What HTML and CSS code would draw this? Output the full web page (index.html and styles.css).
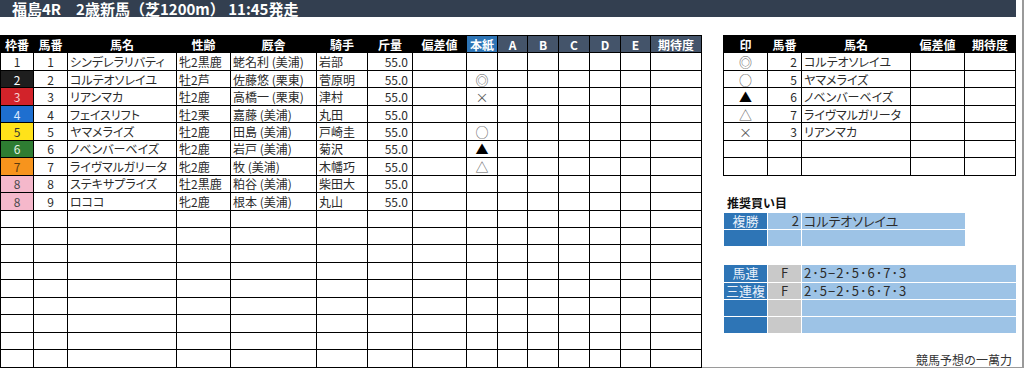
FILE: index.html
```html
<!DOCTYPE html>
<html lang="ja">
<head>
<meta charset="utf-8">
<title>福島4R 2歳新馬</title>
<link rel="stylesheet" href="styles.css">
</head>
<body>
<div class="frame">
  <div class="title">福島4R　2歳新馬（芝1200m） 11:45発走</div>
  <div class="content">
    <table class="main">
      <colgroup>
        <col class="c33"><col class="c34"><col class="c109"><col class="c54"><col class="c86"><col class="c51"><col class="c45"><col class="c54"><col class="c31"><col class="c30"><col class="c31"><col class="c31"><col class="c31"><col class="c30"><col class="c51">
      </colgroup>
      <thead>
        <tr>
          <th>枠番</th><th>馬番</th><th>馬名</th><th>性齢</th><th>厩舎</th><th>騎手</th><th>斤量</th><th>偏差値</th>
          <th class="honshi">本紙</th><th class="sub">A</th><th class="sub">B</th><th class="sub">C</th><th class="sub">D</th><th class="sub">E</th><th class="sub">期待度</th>
        </tr>
      </thead>
      <tbody>
        <tr><td class="waku w1">1</td><td class="ctr">1</td><td class="name">シンデレラリバティ</td><td>牝2黒鹿</td><td>蛯名利 (美浦)</td><td>岩部</td><td class="num">55.0</td><td></td><td class="mark"></td><td></td><td></td><td></td><td></td><td></td><td></td></tr>
        <tr><td class="waku w2">2</td><td class="ctr">2</td><td class="name">コルテオソレイユ</td><td>牡2芦</td><td>佐藤悠 (栗東)</td><td>菅原明</td><td class="num">55.0</td><td></td><td class="mark">◎</td><td></td><td></td><td></td><td></td><td></td><td></td></tr>
        <tr><td class="waku w3">3</td><td class="ctr">3</td><td class="name">リアンマカ</td><td>牡2鹿</td><td>高橋一 (栗東)</td><td>津村</td><td class="num">55.0</td><td></td><td class="mark">×</td><td></td><td></td><td></td><td></td><td></td><td></td></tr>
        <tr><td class="waku w4">4</td><td class="ctr">4</td><td class="name">フェイスリフト</td><td>牡2栗</td><td>嘉藤 (美浦)</td><td>丸田</td><td class="num">55.0</td><td></td><td class="mark"></td><td></td><td></td><td></td><td></td><td></td><td></td></tr>
        <tr><td class="waku w5">5</td><td class="ctr">5</td><td class="name">ヤマメライズ</td><td>牡2鹿</td><td>田島 (美浦)</td><td>戸崎圭</td><td class="num">55.0</td><td></td><td class="mark">○</td><td></td><td></td><td></td><td></td><td></td><td></td></tr>
        <tr><td class="waku w6">6</td><td class="ctr">6</td><td class="name">ノベンバーベイズ</td><td>牝2鹿</td><td>岩戸 (美浦)</td><td>菊沢</td><td class="num">55.0</td><td></td><td class="mark dark">▲</td><td></td><td></td><td></td><td></td><td></td><td></td></tr>
        <tr><td class="waku w7">7</td><td class="ctr">7</td><td class="name">ライヴマルガリータ</td><td>牝2鹿</td><td>牧 (美浦)</td><td>木幡巧</td><td class="num">55.0</td><td></td><td class="mark">△</td><td></td><td></td><td></td><td></td><td></td><td></td></tr>
        <tr><td class="waku w8">8</td><td class="ctr">8</td><td class="name">ステキサプライズ</td><td>牡2黒鹿</td><td>粕谷 (美浦)</td><td>柴田大</td><td class="num">55.0</td><td></td><td class="mark"></td><td></td><td></td><td></td><td></td><td></td><td></td></tr>
        <tr><td class="waku w8">8</td><td class="ctr">9</td><td class="name">ロココ</td><td>牝2鹿</td><td>根本 (美浦)</td><td>丸山</td><td class="num">55.0</td><td></td><td class="mark"></td><td></td><td></td><td></td><td></td><td></td><td></td></tr>
        <tr><td></td><td></td><td></td><td></td><td></td><td></td><td></td><td></td><td></td><td></td><td></td><td></td><td></td><td></td><td></td></tr>
        <tr><td></td><td></td><td></td><td></td><td></td><td></td><td></td><td></td><td></td><td></td><td></td><td></td><td></td><td></td><td></td></tr>
        <tr><td></td><td></td><td></td><td></td><td></td><td></td><td></td><td></td><td></td><td></td><td></td><td></td><td></td><td></td><td></td></tr>
        <tr><td></td><td></td><td></td><td></td><td></td><td></td><td></td><td></td><td></td><td></td><td></td><td></td><td></td><td></td><td></td></tr>
        <tr><td></td><td></td><td></td><td></td><td></td><td></td><td></td><td></td><td></td><td></td><td></td><td></td><td></td><td></td><td></td></tr>
        <tr><td></td><td></td><td></td><td></td><td></td><td></td><td></td><td></td><td></td><td></td><td></td><td></td><td></td><td></td><td></td></tr>
        <tr><td></td><td></td><td></td><td></td><td></td><td></td><td></td><td></td><td></td><td></td><td></td><td></td><td></td><td></td><td></td></tr>
        <tr><td></td><td></td><td></td><td></td><td></td><td></td><td></td><td></td><td></td><td></td><td></td><td></td><td></td><td></td><td></td></tr>
        <tr><td></td><td></td><td></td><td></td><td></td><td></td><td></td><td></td><td></td><td></td><td></td><td></td><td></td><td></td><td></td></tr>
      </tbody>
    </table>

    <div class="side">
      <table class="marks">
        <colgroup><col class="c44"><col class="c34"><col class="c109"><col class="c54"><col class="c51"></colgroup>
        <thead>
          <tr><th>印</th><th>馬番</th><th>馬名</th><th>偏差値</th><th>期待度</th></tr>
        </thead>
        <tbody>
          <tr><td class="mark">◎</td><td class="num">2</td><td class="name">コルテオソレイユ</td><td></td><td></td></tr>
          <tr><td class="mark">○</td><td class="num">5</td><td class="name">ヤマメライズ</td><td></td><td></td></tr>
          <tr><td class="mark dark">▲</td><td class="num">6</td><td class="name">ノベンバーベイズ</td><td></td><td></td></tr>
          <tr><td class="mark">△</td><td class="num">7</td><td class="name">ライヴマルガリータ</td><td></td><td></td></tr>
          <tr><td class="mark">×</td><td class="num">3</td><td class="name">リアンマカ</td><td></td><td></td></tr>
          <tr><td></td><td></td><td></td><td></td><td></td></tr>
          <tr><td></td><td></td><td></td><td></td><td></td></tr>
        </tbody>
      </table>

      <div class="rec-title">推奨買い目</div>

      <div class="bets bets-short">
        <div class="lbl">複勝</div><div class="mid lightblue num">2</div><div class="val name">コルテオソレイユ</div>
        <div class="lbl"></div><div class="mid lightblue"></div><div class="val"></div>
      </div>

      <div class="bets bets-long">
        <div class="lbl">馬連</div><div class="mid gray">F</div><div class="val seq">2･5−2･5･6･7･3</div>
        <div class="lbl">三連複</div><div class="mid gray">F</div><div class="val seq">2･5−2･5･6･7･3</div>
        <div class="lbl"></div><div class="mid gray"></div><div class="val"></div>
        <div class="lbl"></div><div class="mid gray"></div><div class="val"></div>
      </div>

      <div class="credit">競馬予想の一萬力</div>
    </div>
  </div>
</div>
</body>
</html>
```

FILE: styles.css
```css
* { box-sizing: border-box; }

html, body {
  margin: 0;
  padding: 0;
  background: #ffffff;
}

body {
  font-family: "Noto Sans CJK JP", "Noto Sans", sans-serif;
  font-size: 12px;
  color: #2b2b2b;
}

.frame {
  width: 1024px;
  height: 368px;
  border-right: 2px solid #9a9a9a;
  border-bottom: 1px solid #9a9a9a;
}

.title {
  width: 1016px;
  height: 17px;
  background: #333f50;
  color: #ffffff;
  font-weight: 700;
  font-size: 15px;
  line-height: 17px;
  padding-left: 12px;
  white-space: nowrap;
}

.content {
  display: flex;
  align-items: flex-start;
  gap: 21px;
  margin-top: 18px;
}

/* tables */
table {
  border-collapse: collapse;
  table-layout: fixed;
}

.main { width: 702px; }
.marks { width: 293px; }

.c30 { width: 30px; }
.c31 { width: 31px; }
.c33 { width: 33px; }
.c34 { width: 34px; }
.c44 { width: 44px; }
.c45 { width: 45px; }
.c51 { width: 51px; }
.c54 { width: 54px; }
.c86 { width: 86px; }
.c109 { width: 109px; }

th, td {
  border: 1px solid #000;
  height: 17.46px;
  padding: 0 2px;
  line-height: 15px;
  white-space: nowrap;
  overflow: hidden;
  text-align: left;
  font-weight: 400;
}

th {
  background: #000;
  color: #fff;
  font-weight: 700;
  text-align: center;
  font-size: 12px;
}

th.honshi { background: #2e75b6; }
th.sub { background: #44546a; }

td.ctr, td.waku { text-align: center; }
td.num { text-align: right; padding-right: 4px; }
td.name, .name { font-feature-settings: "palt"; }

td.mark {
  text-align: center;
  color: #5a5a5a;
  font-size: 13px;
}
td.mark.dark { color: #000; }

.w1 { background: #ffffff; color: #2b2b2b; }
.w2 { background: #1e1e1e; color: #ffffff; }
.w3 { background: #d2232a; color: #f6d0d0; }
.w4 { background: #1e6fd0; color: #dbe8ff; }
.w5 { background: #ffe21a; color: #333; }
.w6 { background: #2e7d32; color: #e3f3e3; }
.w7 { background: #f7941d; color: #5a3a10; }
.w8 { background: #f5b8cb; color: #4a4a4a; }

/* side */
.side {
  width: 293px;
  display: flex;
  flex-direction: column;
}

.rec-title {
  margin-top: 19px;
  padding-left: 4px;
  font-weight: 700;
  font-size: 12px;
  line-height: 16px;
  color: #111;
}

.bets {
  display: grid;
  grid-template-columns: 43px 33px 1fr;
  grid-auto-rows: 16.3px;
  gap: 1px;
  margin-left: 1px;
  font-size: 13px;
  line-height: 16px;
}

.bets-short { width: 241px; margin-top: 2px; }
.bets-long { width: 292px; margin-top: 19px; }

.bets .lbl {
  background: #2e75b6;
  color: #e8f0fa;
  text-align: center;
  white-space: nowrap;
}

.bets .mid { text-align: center; }
.bets .mid.num { text-align: right; padding-right: 2px; }
.lightblue { background: #9dc3e6; }
.gray { background: #c9c9c9; }

.bets .val {
  background: #9dc3e6;
  padding-left: 2px;
  white-space: nowrap;
}

.bets .val.seq { letter-spacing: 1px; }

.credit {
  margin-top: 19px;
  text-align: right;
  padding-right: 4px;
  font-size: 12px;
  line-height: 16px;
  color: #333;
}
```
